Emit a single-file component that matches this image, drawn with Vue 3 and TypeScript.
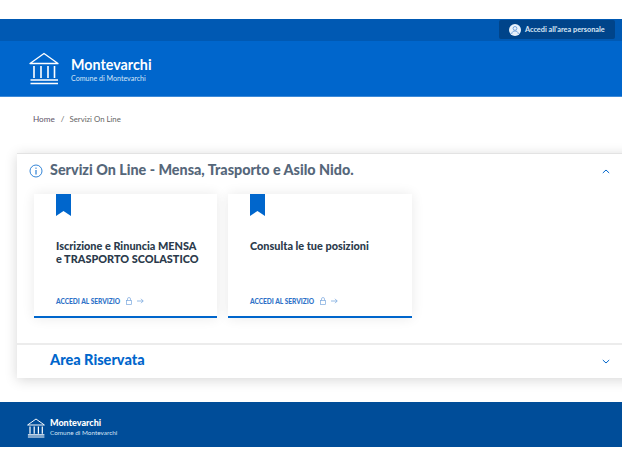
<script setup lang="ts">
const cards: { title: string[] }[] = [
  { title: ['Iscrizione e Rinuncia MENSA', 'e TRASPORTO SCOLASTICO'] },
  { title: ['Consulta le tue posizioni'] },
]
</script>

<template>
  <div class="page">
    <div class="slim">
      <a class="login">
        <svg class="user" width="12" height="12" viewBox="0 0 12 12">
          <circle cx="6" cy="6" r="6" fill="#e8f1fb" />
          <circle cx="6" cy="4.4" r="1.9" fill="none" stroke="#5b93d6" stroke-width="0.8" />
          <path d="M2.6 10 C3 7.6 4.4 7 6 7 C7.6 7 9 7.6 9.4 10" fill="none" stroke="#5b93d6" stroke-width="0.8" />
        </svg>
        <span>Accedi all'area personale</span>
      </a>
    </div>
    <header class="head">
      <svg class="temple" width="30" height="33" viewBox="0 0 30 33" fill="none" stroke="#fff">
        <path d="M1 11.5 L15 1.5 L29 11.5 Z" stroke-width="1.3" stroke-linejoin="round" />
        <path d="M5 14 V26 M12 14 V26 M19 14 V26 M25.5 14 V26" stroke-width="1.6" />
        <path d="M1.5 28 H29 M1.5 31.5 H29" stroke-width="1.6" />
      </svg>
      <div class="brand">
        <div class="name">Montevarchi</div>
        <div class="sub">Comune di Montevarchi</div>
      </div>
    </header>
    <nav class="crumb">
      <span class="home">Home</span><span class="sep">/</span><span class="here">Servizi On Line</span>
    </nav>
    <section class="acc">
      <div class="acc-head">
        <svg class="info" width="14" height="14" viewBox="0 0 14 14" fill="none" stroke="#0066cc">
          <circle cx="7" cy="7" r="6" stroke-width="0.8" />
          <path d="M7 6 V10.5" stroke-width="1" />
          <path d="M7 3.6 V4.8" stroke-width="1" />
        </svg>
        <h2 class="title">Servizi On Line - Mensa, Trasporto e Asilo Nido.</h2>
        <svg class="chev" width="8" height="5" viewBox="0 0 8 5" fill="none" stroke="#0066cc" stroke-width="1">
          <path d="M0.8 4 L4 1 L7.2 4" />
        </svg>
      </div>
      <div class="cards">
        <article v-for="(c, i) in cards" :key="i" class="card">
          <svg class="flag" width="15" height="22" viewBox="0 0 15 22"><path d="M0 0 H15 V22 L7.5 17 L0 22 Z" fill="#0066cc" /></svg>
          <h3 class="card-title"><span v-for="(l, j) in c.title" :key="j" class="line">{{ l }}</span></h3>
          <div class="link">
            <span class="link-text">ACCEDI AL SERVIZIO</span>
            <svg class="lock" width="6" height="8" viewBox="0 0 6 8" fill="none" stroke="#7aa8de" stroke-width="0.7">
              <rect x="0.5" y="3.4" width="5" height="4" />
              <path d="M1.5 3.4 V2 A1.5 1.5 0 0 1 4.5 2 V3.4" />
            </svg>
            <svg class="arrow" width="7" height="6" viewBox="0 0 7 6" fill="none" stroke="#7aa8de" stroke-width="0.8">
              <path d="M0 3 H6.2 M4 0.8 L6.2 3 L4 5.2" />
            </svg>
          </div>
        </article>
      </div>
      <div class="acc-head second">
        <h2 class="title blue">Area Riservata</h2>
        <svg class="chev" width="8" height="5" viewBox="0 0 8 5" fill="none" stroke="#0066cc" stroke-width="1">
          <path d="M0.8 1 L4 4 L7.2 1" />
        </svg>
      </div>
    </section>
    <footer class="foot">
      <svg width="18" height="20" viewBox="0 0 30 33" fill="none" stroke="#fff">
        <path d="M1 11.5 L15 1.5 L29 11.5 Z" stroke-width="1.6" stroke-linejoin="round" />
        <path d="M5 14 V26 M12 14 V26 M19 14 V26 M25.5 14 V26" stroke-width="2" />
        <path d="M1.5 28 H29 M1.5 31.5 H29" stroke-width="2" />
      </svg>
      <div class="brand">
        <div class="fname">Montevarchi</div>
        <div class="fsub">Comune di Montevarchi</div>
      </div>
    </footer>
  </div>
</template>

<style scoped>
.page {
  width: 622px;
  height: 466px;
  overflow: hidden;
  background: #fff;
  font-family: Lato, "Open Sans", sans-serif;
  padding-top: 19px;
  box-sizing: border-box;
}
.slim {
  height: 22px;
  background: #0059b3;
  display: flex;
  justify-content: flex-end;
  padding-right: 7px;
}
.login {
  width: 116px;
  height: 19px;
  background: #00448a;
  border-radius: 2px;
  display: flex;
  align-items: center;
  gap: 4px;
  padding-left: 10px;
  box-sizing: border-box;
  color: #dbe8f6;
  font-size: 7.3px;
  font-weight: 700;
  white-space: nowrap;
  margin-top: 1px;
}
.head {
  height: 55px;
  background: #0066cc;
  border-bottom: 1px solid #3d8ad8;
  display: flex;
  align-items: center;
  gap: 12px;
  padding-left: 29px;
}
.name {
  color: #fff;
  font-size: 14.3px;
  font-weight: 700;
  line-height: 17px;
  margin-top: 2px;
}
.sub {
  color: #d5e5f6;
  font-size: 7.1px;
  line-height: 10px;
  margin-top: 1px;
}
.crumb {
  height: 44px;
  padding-left: 33px;
  margin-bottom: 12px;
  display: flex;
  align-items: center;
  color: #666;
  font-size: 8.2px;
}
.home {
  color: #5e5468;
}
.here {
  font-size: 7.8px;
}
.sep {
  margin: 0 5px 0 6px;
}
.acc {
  margin-left: 17px;
  width: 620px;
  box-shadow: 0 2px 12px rgba(0, 0, 0, 0.16);
  border-top: 1px solid #e3e3e3;
  background: #fff;
}
.acc-head {
  height: 33px;
  display: flex;
  align-items: center;
  padding-left: 12px;
  position: relative;
}
.info {
  margin-right: 7px;
}
.title {
  margin: 0 0 2px;
  font-size: 14.35px;
  font-weight: 900;
  color: #56677a;
}
.blue {
  font-size: 14.5px;
  color: #0066cc;
  margin-left: 21px;
  margin-bottom: 4px;
}
.chev {
  position: absolute;
  left: 585px;
  top: 15px;
}
.cards {
  display: flex;
  gap: 11px;
  padding: 7px 0 25px 17px;
}
.card {
  width: 183px;
  height: 124px;
  box-sizing: border-box;
  background: #fff;
  border-bottom: 2px solid #0066cc;
  box-shadow: 0 0 12px rgba(0, 0, 0, 0.09);
  padding-left: 22px;
  display: flex;
  flex-direction: column;
  position: relative;
}
.card:last-child {
  width: 184px;
}
.flag {
  display: block;
}
.card-title {
  margin: 23px 0 0;
  font-size: 10.9px;
  font-weight: 900;
  line-height: 13px;
  color: #2b3a4b;
}
.line {
  display: block;
}
.link {
  position: absolute;
  left: 22px;
  top: 103px;
  display: flex;
  align-items: center;
  color: #2f72c8;
  font-size: 6.6px;
  font-weight: 900;
}
.lock {
  margin-left: 6px;
}
.arrow {
  margin-left: 5px;
}
.second {
  border-top: 2px solid #ececec;
  height: 33px;
}
.second .chev {
  top: 14px;
}
.foot {
  margin-top: 24px;
  height: 45px;
  background: #004d99;
  display: flex;
  align-items: center;
  gap: 5px;
  padding-left: 27px;
  padding-top: 6px;
  box-sizing: border-box;
}
.fname {
  color: #fff;
  font-size: 9px;
  font-weight: 900;
  line-height: 10px;
}
.fsub {
  color: #d5e5f6;
  font-size: 6.4px;
  line-height: 8px;
  margin-top: 1px;
}
</style>
